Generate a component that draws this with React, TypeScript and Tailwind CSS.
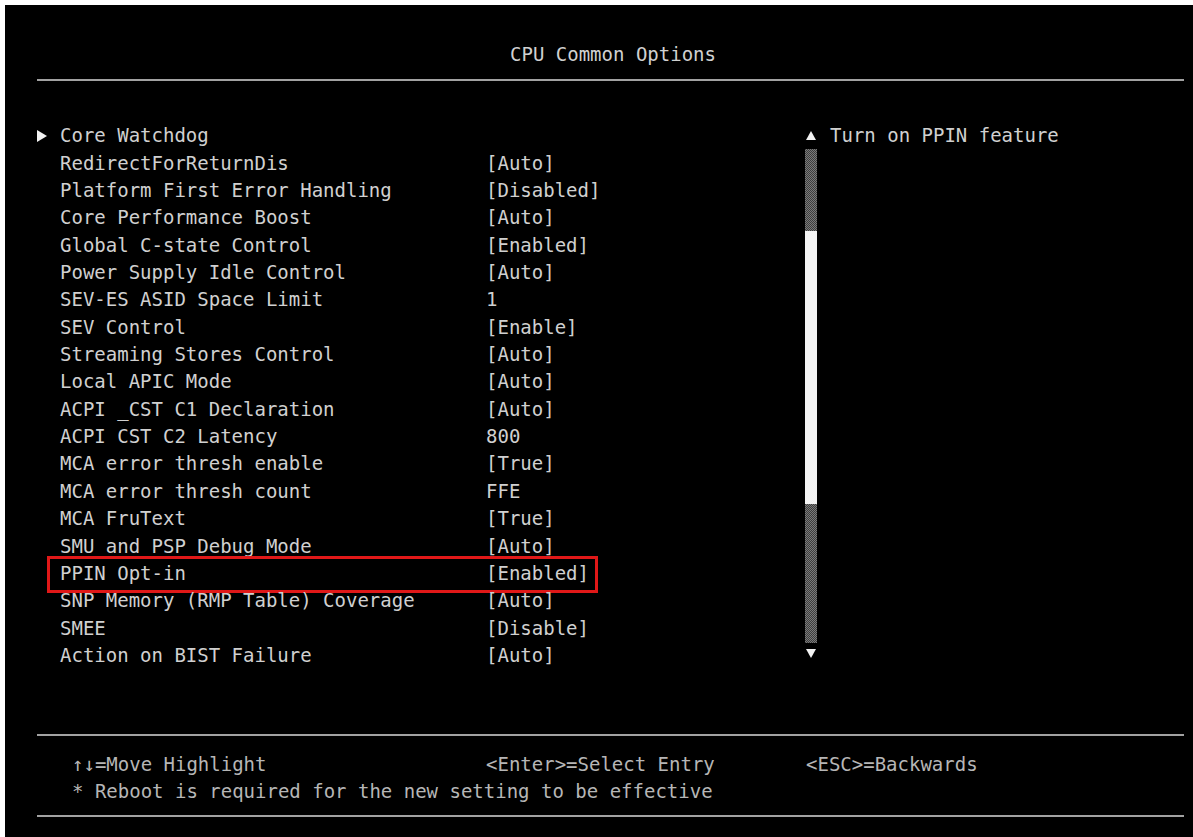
import React from "react";

type Item = { label: string; value?: string; submenu?: boolean; marked?: boolean };

const items: Item[] = [
  { label: "Core Watchdog", submenu: true },
  { label: "RedirectForReturnDis", value: "[Auto]" },
  { label: "Platform First Error Handling", value: "[Disabled]" },
  { label: "Core Performance Boost", value: "[Auto]" },
  { label: "Global C-state Control", value: "[Enabled]" },
  { label: "Power Supply Idle Control", value: "[Auto]" },
  { label: "SEV-ES ASID Space Limit", value: "1" },
  { label: "SEV Control", value: "[Enable]" },
  { label: "Streaming Stores Control", value: "[Auto]" },
  { label: "Local APIC Mode", value: "[Auto]" },
  { label: "ACPI _CST C1 Declaration", value: "[Auto]" },
  { label: "ACPI CST C2 Latency", value: "800" },
  { label: "MCA error thresh enable", value: "[True]" },
  { label: "MCA error thresh count", value: "FFE" },
  { label: "MCA FruText", value: "[True]" },
  { label: "SMU and PSP Debug Mode", value: "[Auto]" },
  { label: "PPIN Opt-in", value: "[Enabled]", marked: true },
  { label: "SNP Memory (RMP Table) Coverage", value: "[Auto]" },
  { label: "SMEE", value: "[Disable]" },
  { label: "Action on BIST Failure", value: "[Auto]" },
];

const Triangle = ({ dir }: { dir: "up" | "down" | "right" }) => {
  const points =
    dir === "up" ? "5,0 10,9 0,9" : dir === "down" ? "0,0 10,0 5,9" : "0,0 10,6 0,12";
  const w = 10;
  const h = dir === "right" ? 12 : 9;
  return (
    <svg width={w} height={h} viewBox={`0 0 ${w} ${h}`} className="block">
      <polygon points={points} fill="#f2f2f2" />
    </svg>
  );
};

// dithered scrollbar track
const Track = ({ h }: { h: string }) => (
  <div
    className={`${h} w-full bg-[repeating-conic-gradient(#7a7a7a_0_25%,#3c3c3c_0_50%)] bg-size-[2px_2px]`}
  />
);

// horizontal rule spanning the frame
const Rule = () => (
  <div className="flex">
    <div className="w-[32px] shrink-0" />
    <div className="h-[2px] w-[1147px] shrink-0 bg-[#a2a2a2]" />
  </div>
);

export default function App() {
  return (
    <div className="w-[1193px] h-[837px] bg-white pt-[5px] pl-[5px] overflow-hidden">
      <div className="relative h-full w-full bg-black flex flex-col text-[19px] text-[#d0d0d0] font-['DejaVu_Sans_Mono','Liberation_Mono',monospace]">
        {/* title bar */}
        <div className="h-[74px] pl-[32px] pr-[4px] pt-[37px]">
          <div className="leading-[24px] text-center">CPU Common Options</div>
        </div>
        <Rule />

        {/* menu body */}
        <div className="flex pt-[41px] pl-[32px]">
          <div className="w-[768px] flex flex-col">
            {items.map((it) => (
              <div key={it.label} className="relative h-[27.37px] flex items-center leading-none">
                <div className="w-[23px] flex items-center">
                  {it.submenu && <Triangle dir="right" />}
                </div>
                <div className="w-[426px] whitespace-pre">{it.label}</div>
                <div className="whitespace-pre">{it.value}</div>
                {it.marked && (
                  <div className="absolute left-[10px] top-[-4px] w-[551px] h-[37px] border-[3px] border-[#e01818]" />
                )}
              </div>
            ))}
          </div>

          {/* scrollbar */}
          <div className="w-[12px] flex flex-col items-center">
            <div className="h-[27px] flex items-center justify-center">
              <Triangle dir="up" />
            </div>
            <div className="w-full flex flex-col">
              <Track h="h-[82px]" />
              <div className="h-[273px] w-full bg-[#f4f4f4]" />
              <Track h="h-[139px]" />
            </div>
            <div className="mt-[6px]">
              <Triangle dir="down" />
            </div>
          </div>

          {/* help pane */}
          <div className="ml-[13px] h-[27.37px] flex items-center leading-none whitespace-pre">
            Turn on PPIN feature
          </div>
        </div>

        {/* footer */}
        <div className="mt-[65px]">
          <Rule />
        </div>
        <div className="pt-[15px] pl-[67px] text-[#b6b6b6] leading-none">
          <div className="h-[27px] flex items-center whitespace-pre">
            <div className="w-[414px]">↑↓=Move Highlight</div>
            <div className="w-[320px]">&lt;Enter&gt;=Select Entry</div>
            <div>&lt;ESC&gt;=Backwards</div>
          </div>
          <div className="h-[27px] flex items-center whitespace-pre">
            * Reboot is required for the new setting to be effective
          </div>
        </div>
        <div className="mt-[10px]">
          <Rule />
        </div>
      </div>
    </div>
  );
}
